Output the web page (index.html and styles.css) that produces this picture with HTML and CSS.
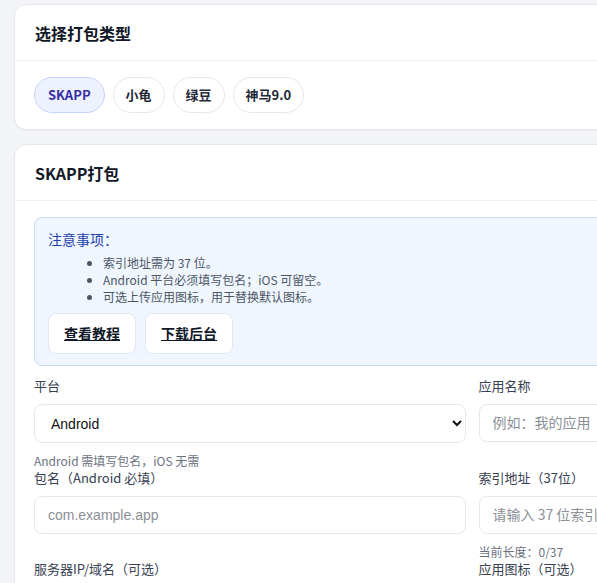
FILE: index.html
```html
<!DOCTYPE html>
<html lang="zh-CN">
  <head>
    <meta charset="UTF-8" />
    <meta name="viewport" content="width=device-width, initial-scale=1.0" />
    <title>打包工具</title>
    <link rel="stylesheet" href="styles.css">
  </head>
  <body>
    <div class="page">
      <div class="card">
        <div class="cardHeader">选择打包类型</div>
        <div class="cardBody">
          <div class="chips">
            <button class="chip active">SKAPP</button>
            <button class="chip">小龟</button>
            <button class="chip">绿豆</button>
            <button class="chip">神马9.0</button>
          </div>
        </div>
      </div>

      <div class="card">
        <div class="cardHeader">SKAPP打包</div>
        <div class="cardBody">
          <div class="notice">
            <div class="noticeTitle">注意事项：</div>
            <ul class="noticeList">
              <li>索引地址需为 37 位。</li>
              <li>Android 平台必须填写包名；iOS 可留空。</li>
              <li>可选上传应用图标，用于替换默认图标。</li>
            </ul>
            <div class="linkButtons">
              <a class="linkButton" href="#">查看教程</a>
              <a class="linkButton" href="#">下载后台</a>
            </div>
          </div>

          <div class="formGrid">
            <div class="field">
              <label class="label">平台</label>
              <select class="control">
                <option>Android</option>
                <option>iOS</option>
              </select>
              <div class="hint">Android 需填写包名，iOS 无需</div>
            </div>
            <div class="field">
              <label class="label">应用名称</label>
              <input class="control" type="text" placeholder="例如：我的应用">
            </div>

            <div class="field">
              <label class="label">包名（Android 必填）</label>
              <input class="control" type="text" placeholder="com.example.app">
            </div>
            <div class="field">
              <label class="label">索引地址（37位）</label>
              <input class="control" type="text" placeholder="请输入 37 位索引地址">
              <div class="hint">当前长度：0/37</div>
            </div>

            <div class="field">
              <label class="label">服务器IP/域名（可选）</label>
              <input class="control" type="text" placeholder="例如：192.168.1.1">
            </div>
            <div class="field">
              <label class="label">应用图标（可选）</label>
              <input class="control" type="file">
            </div>
          </div>
        </div>
      </div>
    </div>
  </body>
</html>
```

FILE: styles.css
```css
html,
body {
  margin: 0;
  overflow: hidden;
}

body {
  background-color: #f3f4f7;
  font-family: "Noto Sans CJK SC", "Noto Sans", sans-serif;
  color: #111827;
}

.page {
  width: 916px;
  padding: 4px 14px 14px 14px;
  display: flex;
  flex-direction: column;
  gap: 14px;
}

.card {
  background-color: #fff;
  border: 1px solid #e5e7eb;
  border-radius: 12px;
  box-shadow: 0 1px 2px rgba(0, 0, 0, 0.04);
}

.cardHeader {
  height: 55px;
  padding: 0 20px;
  display: flex;
  align-items: center;
  font-size: 16px;
  font-weight: 700;
  border-bottom: 1px solid #eef0f3;
}

.cardBody {
  padding: 16px 19px 16px 19px;
}

.chips {
  display: flex;
  gap: 8px;
}

.chip {
  padding: 8px 12px;
  line-height: 18px;
  font-family: inherit;
  font-size: 13px;
  font-weight: 700;
  color: #1f2937;
  background-color: #fff;
  border: 1px solid #e5e7eb;
  border-radius: 999px;
  cursor: pointer;
}

.chip.active {
  padding: 8px 13px;
  color: #3730a3;
  background-color: #eef2ff;
  border-color: #c7d2fe;
}

.notice {
  background-color: #eff6ff;
  border: 1px solid #c9dcf5;
  border-radius: 8px;
  padding: 11px 13px 11px 13px;
}

.noticeTitle {
  font-size: 14px;
  line-height: 20px;
  color: #1e40af;
}

.noticeList {
  margin: 5px 0 8px 0;
  padding-left: 55px;
  font-size: 12px;
  line-height: 17px;
  color: #4b5563;
}

.linkButtons {
  display: flex;
  gap: 9px;
}

.linkButton {
  padding: 10px 15px;
  line-height: 19px;
  font-size: 14px;
  font-weight: 700;
  color: #111827;
  text-decoration: underline;
  background-color: #fff;
  border: 1px solid #e3e8ef;
  border-radius: 8px;
}

.formGrid {
  margin-top: 11px;
  display: grid;
  grid-template-columns: 1fr 1fr;
  column-gap: 13px;
}

.field {
  display: flex;
  flex-direction: column;
}

.label {
  font-size: 13px;
  line-height: 18px;
  color: #374151;
  margin-bottom: 9px;
}

.control {
  box-sizing: border-box;
  height: 38px;
  padding: 0 13px;
  font-family: "Liberation Sans", Arial, sans-serif;
  font-size: 14px;
  color: #111;
  background-color: #fff;
  border: 1px solid #e5e7eb;
  border-radius: 8px;
}

select.control {
  height: 39px;
  padding-left: 12px;
}

.control::placeholder {
  color: #8b8f96;
  font-family: "Noto Sans CJK SC", "Liberation Sans", sans-serif;
}

input[placeholder="com.example.app"]::placeholder {
  font-family: "Liberation Sans", Arial, sans-serif;
}

.hint {
  margin-top: 10px;
  font-size: 12px;
  line-height: 16px;
  color: #6b7280;
}
```
